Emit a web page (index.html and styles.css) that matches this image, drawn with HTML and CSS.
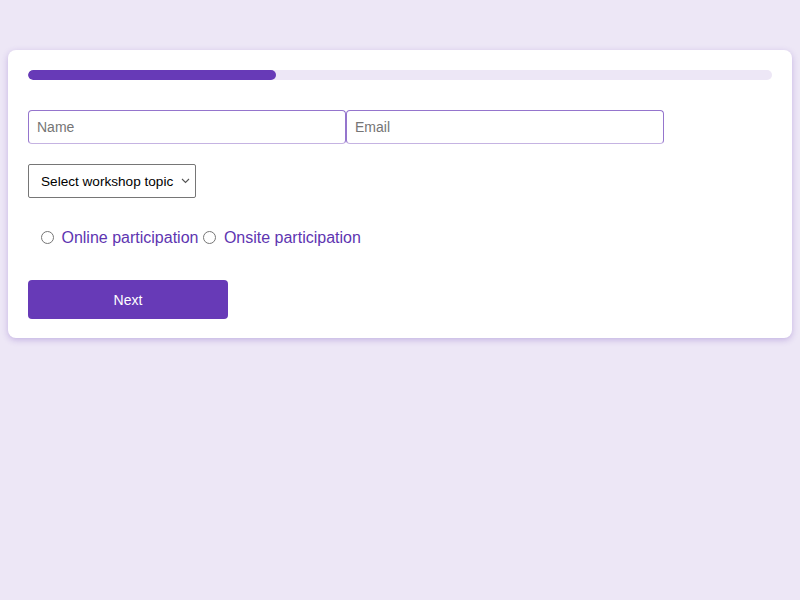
FILE: index.html
```html
<!DOCTYPE html>
<html>
<head>
<meta charset="utf-8">
<link rel="stylesheet" href="styles.css">
</head>
<body>
<form class="card">
  <div class="progress"><div class="progress-fill" style="width:33.33%"></div></div>
  <div class="row">
    <input class="field" type="text" placeholder="Name"><input class="field" type="email" placeholder="Email">
  </div>
  <div class="row">
    <select class="select">
      <option>Select workshop topic</option>
    </select>
  </div>
  <div class="radios"><input type="radio" name="mode" id="online"> <label for="online" class="radio-label">Online participation</label><input type="radio" name="mode" id="onsite"> <label for="onsite" class="radio-label">Onsite participation</label></div>
  <button type="button" class="next">Next</button>
</form>
</body>
</html>
```
FILE: styles.css
```css
html, body {
  margin: 0;
  background: #ede7f6;
  font-family: "Liberation Sans", Arial, sans-serif;
}
body {
  padding: 50px 8px;
}
.card {
  display: block;
  background: #fff;
  border-radius: 8px;
  padding: 20px 20px 19px;
  box-shadow: 0 2px 6px rgba(103, 58, 183, 0.3);
}
.progress {
  height: 10px;
  background: #ede7f6;
  border-radius: 5px;
  overflow: hidden;
  margin-bottom: 30px;
}
.progress-fill {
  height: 100%;
  background: #673ab7;
  border-radius: 5px;
}
.row {
  display: flex;
  margin-bottom: 20px;
}
.field {
  width: 318px;
  height: 34px;
  box-sizing: border-box;
  padding: 8px;
  border: 1px solid #9575cd;
  border-bottom-color: #c5b3e2;
  border-radius: 4px;
  font-family: "Liberation Sans", Arial, sans-serif;
  font-size: 14px;
  margin: 0;
  outline: none;
}
.field::placeholder {
  color: #757575;
}
.select {
  -webkit-appearance: none;
  appearance: none;
  height: 34px;
  width: 168px;
  box-sizing: border-box;
  padding: 0 14px 0 12px;
  border: 1px solid #767676;
  border-radius: 2px;
  background: #fff url("data:image/svg+xml,%3Csvg xmlns='http://www.w3.org/2000/svg' width='9' height='6' viewBox='0 0 9 6'%3E%3Cpath d='M1 1l3.5 3.5L8 1' fill='none' stroke='%23555' stroke-width='1.1'/%3E%3C/svg%3E") no-repeat right 5px center;
  font-family: "Liberation Sans", Arial, sans-serif;
  font-size: 13.6px;
  color: #000;
}
.radios {
  padding: 9px 8px 11px;
  margin-bottom: 20px;
  line-height: 22px;
}
.radios input {
  margin: 0 3px 0 5px;
  width: 13px;
  height: 13px;
  vertical-align: -1px;
}
.radio-label {
  color: #5e35b1;
  font-size: 16px;
}
.next {
  display: block;
  width: 200px;
  height: 39px;
  border: none;
  border-radius: 4px;
  background: #673ab7;
  color: #fff;
  font-family: "Liberation Sans", Arial, sans-serif;
  font-size: 14px;
  font-weight: 500;
}
```
